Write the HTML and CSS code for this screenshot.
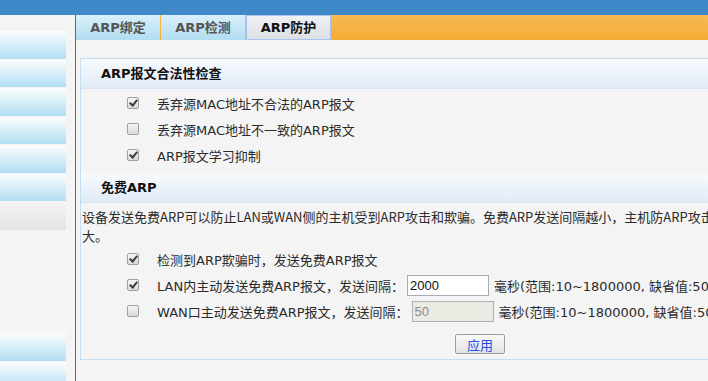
FILE: index.html
```html
<!DOCTYPE html>
<html lang="zh-CN">
<head>
    <meta charset="UTF-8">
    <meta name="viewport" content="width=device-width, initial-scale=1.0">
    <title>ARP防护</title>
    <link rel="stylesheet" href="styles.css">
</head>
<body>
    <div class="topbar"></div>
    <div class="layout">
        <ul class="menu">
            <li></li>
            <li></li>
            <li></li>
            <li></li>
            <li></li>
            <li></li>
            <li class="menu-gray"></li>
            <li></li>
            <li></li>
        </ul>

        <div class="main">
            <div class="tabs">
                <a class="tab">ARP绑定</a>
                <a class="tab">ARP检测</a>
                <a class="tab active">ARP防护</a>
            </div>

            <div class="content">
                <div class="panel">
                    <div class="sec-head">ARP报文合法性检查</div>
                    <div class="opts">
                        <label class="opt"><input type="checkbox" checked><span>丢弃源MAC地址不合法的ARP报文</span></label>
                        <label class="opt"><input type="checkbox"><span>丢弃源MAC地址不一致的ARP报文</span></label>
                        <label class="opt"><input type="checkbox" checked><span>ARP报文学习抑制</span></label>
                    </div>

                    <div class="sec-head">免费ARP</div>
                    <p class="desc">设备发送免费ARP可以防止LAN或WAN侧的主机受到ARP攻击和欺骗。免费ARP发送间隔越小，主机防ARP攻击能力越大。</p>
                    <div class="opts">
                        <label class="opt"><input type="checkbox" checked><span>检测到ARP欺骗时，发送免费ARP报文</span></label>
                        <div class="opt">
                            <input type="checkbox" checked><span>LAN内主动发送免费ARP报文，发送间隔：</span>
                            <input type="text" class="num" value="2000">
                            <span>毫秒(范围:10~1800000, 缺省值:5000)</span>
                        </div>
                        <div class="opt">
                            <input type="checkbox"><span>WAN口主动发送免费ARP报文，发送间隔：</span>
                            <input type="text" class="num" value="50" disabled>
                            <span>毫秒(范围:10~1800000, 缺省值:5000)</span>
                        </div>
                    </div>

                    <div class="actions">
                        <button>应用</button>
                    </div>
                </div>
            </div>
        </div>
    </div>
</body>
</html>
```

FILE: styles.css
```css
body {
    margin: 0;
    height: 381px;
    overflow: hidden;
    background-color: #f4f4f4;
    font-family: "DejaVu Sans", "Noto Sans CJK SC", sans-serif;
    font-size: 13px;
    color: #2b2b2b;
}

.topbar {
    height: 15px;
    background-color: #3f89c9;
}

.layout {
    display: flex;
    height: 366px;
}

/* левое меню */
.menu {
    flex: none;
    width: 75px;
    margin: 0;
    padding: 16px 0 0;
    list-style: none;
}

.menu li {
    width: 66px;
    height: 27.5px;
    margin-bottom: 1px;
    background: linear-gradient(#fbfdfe, #b2def3);
}

.menu li.menu-gray {
    background: linear-gradient(#f3f3f3, #e1e3e5);
    margin-bottom: 103.5px;
}

.main {
    flex: none;
    width: 900px;
    border-left: 1px solid #2a70d8;
}

/* вкладки */
.tabs {
    display: flex;
    gap: 1px;
    height: 25px;
    background: linear-gradient(#f8b951, #f6ad36);
}

.tab {
    width: 84px;
    line-height: 25px;
    text-align: center;
    font-weight: bold;
    color: #555;
    background: linear-gradient(#d9f0fa, #b1ddf2);
}

.tab.active {
    width: 85px;
    box-sizing: border-box;
    line-height: 23px;
    border: 1px solid #a6c4ee;
    color: #111;
    background: linear-gradient(#eff1f5, #dcdfe4);
}

.content {
    padding: 18px 0 0 4px;
}

.panel {
    width: 800px;
    box-sizing: border-box;
    border: 1px solid #c6dcf1;
}

.sec-head {
    height: 29px;
    line-height: 29px;
    padding-left: 20px;
    border-bottom: 1px solid #d6e4f3;
    background: linear-gradient(#f8fafd, #e1ebf8);
    font-weight: bold;
    font-size: 13px;
    color: #111;
}

.opts {
    padding: 1px 0 5px;
}

.opt {
    display: flex;
    align-items: center;
    height: 26px;
    padding-left: 46px;
    white-space: nowrap;
}

.opt input[type="checkbox"] {
    appearance: none;
    position: relative;
    flex: none;
    width: 12px;
    height: 12px;
    margin: 0 18px 0 0;
    border: 1px solid #a0a0a0;
    border-radius: 2px;
    background: linear-gradient(#f6f6f6, #d9d9d9);
}

.opt input[type="checkbox"]:checked::after {
    content: "";
    position: absolute;
    left: 3px;
    top: 0;
    width: 3px;
    height: 6px;
    border: solid #3a3a3a;
    border-width: 0 2px 2px 0;
    transform: rotate(40deg);
}

.num {
    width: 82px;
    height: 21px;
    box-sizing: border-box;
    margin: 0 5px 0 3px;
    padding: 0 2px;
    border: 1px solid #a5acb2;
    background-color: #fff;
    font-family: "Liberation Sans", sans-serif;
    font-size: 13px;
    color: #111;
}

.num:disabled {
    background-color: #ebebe4;
    border-color: #b0b0b0;
    color: #8a8a8a;
}

.desc {
    width: 683px;
    margin: 4px 0 0;
    padding-left: 1px;
    line-height: 19px;
    font-family: "Noto Sans CJK SC", sans-serif;
}

.actions {
    padding: 5px 0 5px;
    text-align: center;
}

button {
    width: 50px;
    height: 20px;
    padding: 0;
    border: 1px solid #9d9d9d;
    border-radius: 2px;
    background: linear-gradient(#f8f8f8, #e3e3e3);
    font-family: "Noto Sans CJK SC", sans-serif;
    font-size: 13px;
    color: #1d4fe6;
}
```
